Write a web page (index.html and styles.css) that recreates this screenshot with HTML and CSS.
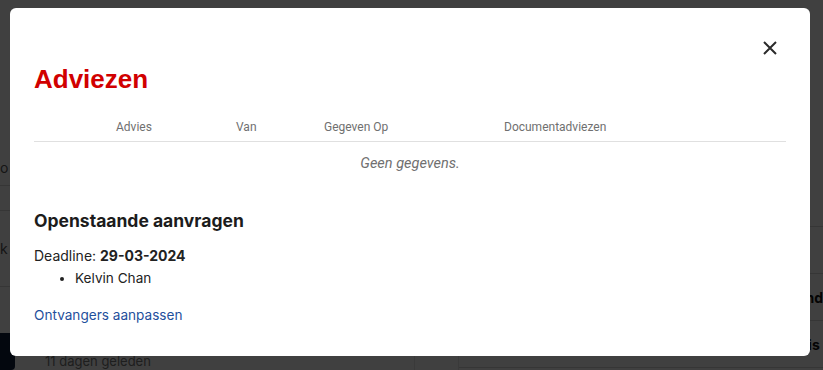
FILE: index.html
```html
<!DOCTYPE html>
<html lang="nl">
<head>
    <meta charset="UTF-8">
    <meta name="viewport" content="width=device-width, initial-scale=1.0">
    <title>Adviezen</title>
    <link rel="stylesheet" href="styles.css">
</head>
<body>
    <!-- page behind the modal -->
    <div class="page">
        <div class="col-left">
            <div class="row row-first">o</div>
            <div class="row"></div>
            <div class="row row-tall">k</div>
            <div class="row-bottom">
                <div class="nav-block"></div>
                <span class="muted">11 dagen geleden</span>
            </div>
        </div>
        <div class="col-mid"></div>
        <div class="col-right">
            <div class="row"></div>
            <div class="row"></div>
            <div class="row bold r-one">Afgerond</div>
            <div class="row bold r-two">Aanvraag is</div>
        </div>
    </div>

    <div class="overlay">
        <div class="modal">
            <div class="modal-top">
                <button class="close" aria-label="Sluiten">
                    <svg width="16" height="16" viewBox="0 0 16 16">
                        <path d="M2 2 L14 14 M14 2 L2 14" stroke="#2b2b2b" stroke-width="2" fill="none"/>
                    </svg>
                </button>
            </div>
            <h1 class="title">Adviezen</h1>

            <table class="table">
                <thead>
                    <tr>
                        <th class="c-pad"></th>
                        <th class="c-advies">Advies</th>
                        <th class="c-van">Van</th>
                        <th class="c-op">Gegeven Op</th>
                        <th>Documentadviezen</th>
                    </tr>
                </thead>
                <tbody>
                    <tr>
                        <td class="empty" colspan="5">Geen gegevens.</td>
                    </tr>
                </tbody>
            </table>

            <h3 class="subtitle">Openstaande aanvragen</h3>
            <div class="deadline">Deadline: <b>29-03-2024</b></div>
            <ul class="people">
                <li>Kelvin Chan</li>
            </ul>
            <a class="link" href="#">Ontvangers aanpassen</a>
        </div>
    </div>
</body>
</html>
```

FILE: styles.css
```css
body {
    margin: 0;
    font-family: Inter, "Noto Sans", sans-serif;
    background-color: #fff;
    overflow: hidden;
}

/* background page */
.page {
    display: flex;
    height: 370px;
}
.col-left {
    width: 420px;
    display: flex;
    flex-direction: column;
}
.col-mid {
    width: 43px;
    margin-top: 345px;
    border-left: 1px solid #e6e6e6;
    border-right: 1px solid #e6e6e6;
}
.col-right {
    flex: 1;
    padding-top: 180px;
}
.row {
    height: 24px;
    border-bottom: 1px solid #d8d8d8;
    font-size: 14px;
    color: #555;
    display: flex;
    align-items: center;
}
.row-first {
    margin-top: 150px;
    height: 35px;
}
.row-tall {
    height: 75px;
}
.col-right .row {
    height: 46px;
    white-space: nowrap;
}
.r-one {
    padding-left: 300px;
}
.r-two {
    padding-left: 280px;
}
.bold {
    font-weight: 700;
    color: #111;
}
.row-bottom {
    margin-top: auto;
    height: 38px;
    display: flex;
    align-items: flex-end;
    gap: 30px;
}
.nav-block {
    width: 15px;
    height: 37px;
    background-color: #0c1d3a;
    border-bottom-right-radius: 4px;
}
.muted {
    font-size: 13px;
    color: #777;
    padding-bottom: 1px;
}

/* overlay + modal */
.overlay {
    position: fixed;
    inset: 0;
    background-color: rgba(0, 0, 0, 0.75);
    padding: 8px 0 0 10px;
}
.modal {
    width: 800px;
    height: 348px;
    box-sizing: border-box;
    background-color: #fff;
    border-radius: 6px;
    padding: 24px 24px 0 24px;
    color: #222;
}
.modal-top {
    height: 32px;
    display: flex;
    justify-content: flex-end;
}
.close {
    width: 32px;
    height: 32px;
    border: none;
    background: none;
    padding: 0;
    display: flex;
    align-items: center;
    justify-content: center;
    cursor: pointer;
}
.title {
    margin: 0 0 16px 0;
    font-family: "Liberation Sans", Arial, sans-serif;
    font-size: 26px;
    line-height: 30px;
    font-weight: 700;
    color: #d10000;
}

.table {
    width: 100%;
    border-collapse: collapse;
    font-family: Roboto, sans-serif;
}
.table th {
    text-align: left;
    font-size: 12px;
    line-height: 16px;
    font-weight: 400;
    color: #707070;
    padding: 9px 0 6px 0;
    border-bottom: 1px solid #e0e0e0;
}
.c-pad { width: 82px; }
.c-advies { width: 120px; }
.c-van { width: 88px; }
.c-op { width: 180px; }
.empty {
    text-align: center;
    font-style: italic;
    font-size: 14.5px;
    line-height: 18px;
    color: #707070;
    padding: 13px 0 11px 0;
}

.subtitle {
    margin: 25px 0 0 0;
    font-size: 17.5px;
    line-height: 24px;
    font-weight: 700;
    color: #1c1c1c;
}
.deadline {
    margin-top: 12px;
    font-size: 14px;
    line-height: 22px;
}
.deadline b {
    font-weight: 700;
}
.people {
    margin: 0;
    padding-left: 41px;
    font-size: 13.6px;
    line-height: 22px;
}
.link {
    display: inline-block;
    margin-top: 15px;
    font-size: 13.6px;
    line-height: 22px;
    color: #1f4f9c;
    text-decoration: none;
}
```
